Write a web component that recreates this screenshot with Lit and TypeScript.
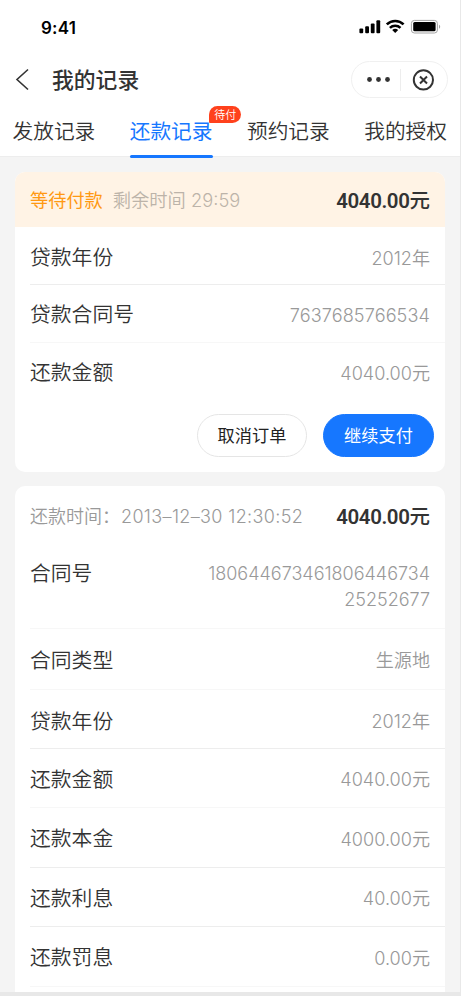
import { LitElement, html, css } from "lit";
import { customElement, property } from "lit/decorators.js";

type Row = { label: string; value: string; size: string };

const loanRows: Row[] = [
  { label: "贷款年份", value: "2012年", size: "h58 strong low" },
  { label: "贷款合同号", value: "7637685766534", size: "h58 number" },
  { label: "还款金额", value: "4040.00元", size: "h58 plain" },
];

const repaymentRows: Row[] = [
  { label: "合同号", value: "18064467346180644673425252677", size: "h84 long" },
  { label: "合同类型", value: "生源地", size: "h61" },
  { label: "贷款年份", value: "2012年", size: "h59 strong low" },
  { label: "还款金额", value: "4040.00元", size: "h59" },
  { label: "还款本金", value: "4000.00元", size: "h60 strong" },
  { label: "还款利息", value: "40.00元", size: "h59 strong" },
  { label: "还款罚息", value: "0.00元", size: "h60" },
];

@customElement("status-bar")
export class StatusBar extends LitElement {
  static styles = css`
    :host { display: flex; justify-content: space-between; align-items: center; height: 53px; padding: 1px 18px 0 41px; box-sizing: border-box; }
    .time { font: 600 17px/20px Inter, sans-serif; color: #000; padding-top: 2px; letter-spacing: 0.2px; }
    .icons { display: block; }
  `;
  render() {
    return html`
      <span class="time">9:41</span>
      <svg class="icons" width="84" height="16" viewBox="0 0 84 16">
        <rect x="1.4" y="9.6" width="3.8" height="4.6" rx="1" />
        <rect x="7.2" y="7.3" width="3.8" height="6.9" rx="1" />
        <rect x="12.8" y="4.4" width="3.8" height="9.8" rx="1" />
        <rect x="18.4" y="1.2" width="3.8" height="13" rx="1" />
        <g fill="none" stroke="#000" stroke-width="2.6">
          <path d="M28.8 5.4a12 12 0 0 1 16.8 0" />
          <path d="M31.9 8.9a7.8 7.8 0 0 1 10.6 0" />
        </g>
        <path d="M37.2 14l-3-2.9a4.3 4.3 0 0 1 6 0z" />
        <rect x="53.4" y="1.4" width="26" height="12.6" rx="3" fill="none" stroke="#a4a4a4" />
        <rect x="55.2" y="3.1" width="22.4" height="9.2" rx="1.5" />
        <path d="M81 5.7v4q1.2-.5 1.2-2t-1.2-2z" fill="#a4a4a4" />
      </svg>
    `;
  }
}

@customElement("detail-row")
export class DetailRow extends LitElement {
  @property() label = "";
  @property() value = "";
  @property() size = "";
  static styles = css`
    .row { display: flex; justify-content: space-between; align-items: center; box-sizing: border-box; margin-left: 15px; padding-right: 15px; border-bottom: 1px solid #f7f7f7; }
    .strong { border-color: #ededed; }
    .plain { border-color: transparent; }
    .h58 { height: 58px; }
    .h59 { height: 59px; }
    .h60 { height: 60px; }
    .h61 { height: 61px; }
    .h84 { height: 84px; align-items: flex-start; padding-top: 14px; }
    .low { padding-top: 2px; }
    .label { font: 350 20.8px/26px "Noto Sans CJK SC", sans-serif; color: #333; white-space: nowrap; padding-bottom: 1px; }
    .value { font: 350 18.1px/26px Inter, "Noto Sans CJK SC", sans-serif; color: #999; text-align: right; padding-top: 2px; }
    .number .value { letter-spacing: 0.1px; }
    .long .value { font-size: 18px; width: 226px; word-break: break-all; line-height: 25.5px; }
  `;
  render() {
    return html`<div class="row ${this.size}">
      <span class="label">${this.label}</span><span class="value">${this.value}</span>
    </div>`;
  }
}

@customElement("app-root")
export class AppRoot extends LitElement {
  static styles = css`
    :host { display: block; box-sizing: border-box; width: 461px; height: 996px; overflow: hidden; background: #e8e8e8; padding: 0 1px 4px 0; font-family: "Noto Sans CJK SC", sans-serif; color: #333; }
    .screen { height: 992px; overflow: hidden; background: #f4f4f4; }
    .top { background: #fff; height: 157px; border-bottom: 1px solid #ededed; box-sizing: border-box; }
    .nav { display: flex; align-items: center; height: 53px; padding: 0 12px 0 15px; }
    .back { display: block; }
    .title { flex: 1; margin-left: 21px; font-size: 21.8px; line-height: 30px; font-weight: 500; padding-bottom: 2px; }
    .capsule { display: flex; align-items: center; width: 97px; height: 37px; border: 1px solid #f0f0f0; border-radius: 19px; box-sizing: border-box; }
    .tabs { display: flex; justify-content: space-between; height: 51px; padding: 0 13px 0 12.5px; }
    .tab { position: relative; font-size: 20.7px; line-height: 49px; height: 51px; white-space: nowrap; font-weight: 350; }
    .active { color: #1677ff; font-weight: 400; }
    .active::after { content: ""; position: absolute; left: 0; right: 0; bottom: -1px; height: 3px; border-radius: 2px; background: #1677ff; }
    .badge { position: absolute; left: 79.5px; top: 0; width: 32px; height: 17px; border-radius: 9px 9px 9px 1px; background: #ff411c; color: #fff; font-size: 11px; line-height: 17px; font-weight: 350; text-align: center; }
    .cards { display: flex; flex-direction: column; gap: 14px; padding: 15px 15px 0; }
    .card { background: #fff; border-radius: 10px; overflow: hidden; }
    .pending { height: 300px; }
    .tall { height: 540px; }
    .head { display: flex; align-items: center; padding: 0 15px; height: 55px; }
    .wait { background: #fff3e5; }
    .paid { height: 59px; }
    .state { color: #ff9912; font-size: 18.2px; line-height: 26px; font-weight: 400; padding-bottom: 1px; }
    .left { margin-left: 10px; color: #bcb3a9; font: 350 18.3px/26px Inter, "Noto Sans CJK SC", sans-serif; padding-top: 1px; }
    .stamp { color: #999; font: 350 18px/26px Inter, "Noto Sans CJK SC", sans-serif; padding-top: 2px; }
    .digits { letter-spacing: 0.35px; margin-left: 1px; }
    .amount { margin-left: auto; font: 600 20.5px/26px Roboto, "Noto Sans CJK SC", sans-serif; padding-top: 3px; }
    .sum { display: inline-block; letter-spacing: -0.4px; }
    .unit { font-weight: 500; }
    .wait .amount { padding-top: 2px; }
    .actions { display: flex; justify-content: flex-end; gap: 16px; padding: 13px 11px 0 0; }
    .btn { box-sizing: border-box; height: 43px; border-radius: 22px; font: 400 17.2px/40px "Noto Sans CJK SC", sans-serif; border: 1px solid #e5e5e5; background: #fff; color: #222; padding: 0 0 1px; }
    .cancel { width: 110px; }
    .pay { width: 111px; border-color: #1677ff; background: #1677ff; color: #fff; }
  `;
  rows(list: Row[]) {
    return list.map((r) => html`<detail-row .label=${r.label} .value=${r.value} .size=${r.size}></detail-row>`);
  }
  amount(sum: string) {
    return html`<span class="amount"><span class="sum">${sum}</span><span class="unit">元</span></span>`;
  }
  render() {
    return html`
      <div class="screen">
        <header class="top">
          <status-bar></status-bar>
          <div class="nav">
            <svg class="back" width="16" height="24" viewBox="0 0 16 24" fill="none" stroke="#333" stroke-width="1.6">
              <path d="M13 1.5L2 11.5l11 10" />
            </svg>
            <span class="title">我的记录</span>
            <div class="capsule">
              <svg width="95" height="35" viewBox="0 0 95 35" fill="#333">
                <circle cx="17.5" cy="17.5" r="2.4" /><circle cx="26.5" cy="17.5" r="2.4" /><circle cx="35.5" cy="17.5" r="2.4" />
                <path d="M48.5 7v22" stroke="#ededed" />
                <g fill="none" stroke="#333" stroke-width="2">
                  <circle cx="71.4" cy="17.9" r="9.6" />
                  <path d="M68 14.5l7 7m0-7l-7 7" />
                </g>
              </svg>
            </div>
          </div>
          <nav class="tabs">
            <span class="tab">发放记录</span>
            <span class="tab active">还款记录<span class="badge">待付</span></span>
            <span class="tab">预约记录</span>
            <span class="tab">我的授权</span>
          </nav>
        </header>
        <main class="cards">
          <section class="card pending">
            <div class="head wait">
              <span class="state">等待付款</span><span class="left">剩余时间 29:59</span>
              ${this.amount("4040.00")}
            </div>
            ${this.rows(loanRows)}
            <div class="actions">
              <button class="btn cancel">取消订单</button><button class="btn pay">继续支付</button>
            </div>
          </section>
          <section class="card tall">
            <div class="head paid">
              <span class="stamp">还款时间：<span class="digits">2013–12–30 12:30:52</span></span>${this.amount("4040.00")}
            </div>
            ${this.rows(repaymentRows)}
          </section>
        </main>
      </div>
    `;
  }
}
